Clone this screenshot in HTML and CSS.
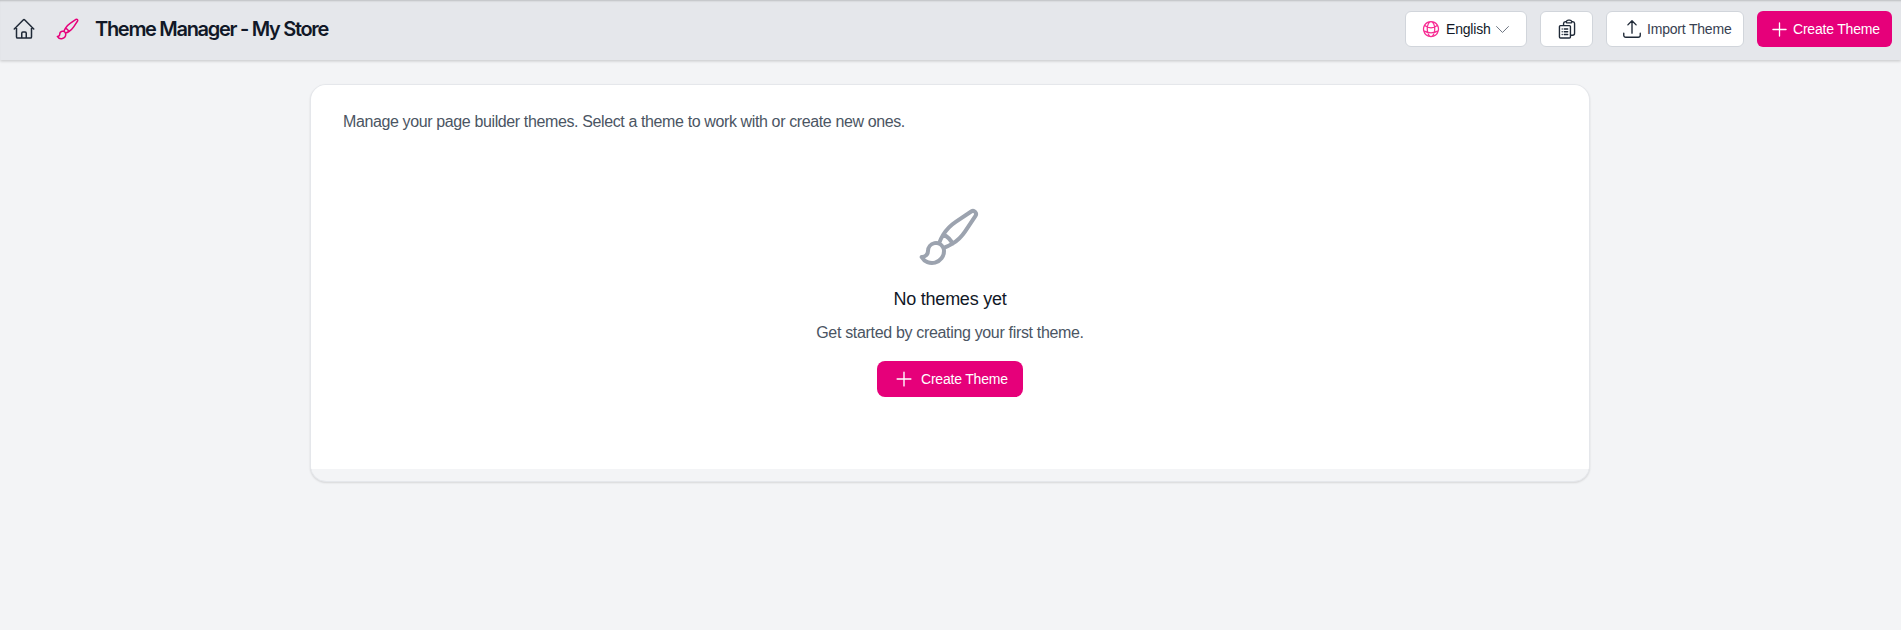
FILE: index.html
```html
<!DOCTYPE html>
<html lang="en">
<head>
    <meta charset="UTF-8">
    <meta name="viewport" content="width=device-width, initial-scale=1.0">
    <title>Theme Manager - My Store</title>
    <link rel="stylesheet" href="styles.css">
</head>
<body>
    <header class="topbar">
        <div class="topbar-left">
            <svg class="icon icon-home" viewBox="0 0 24 24"><path d="m2.25 12 8.954-8.955c.44-.439 1.152-.439 1.591 0L21.75 12M4.5 9.75v10.125c0 .621.504 1.125 1.125 1.125H9.75v-4.875c0-.621.504-1.125 1.125-1.125h2.25c.621 0 1.125.504 1.125 1.125V21h4.125c.621 0 1.125-.504 1.125-1.125V9.75M8.25 21h8.25"/></svg>
            <svg class="icon icon-brush" viewBox="0 0 24 24"><path d="M9.53 16.122a3 3 0 0 0-5.78 1.128 2.25 2.25 0 0 1-2.4 2.245 4.5 4.5 0 0 0 8.4-2.245c0-.399-.078-.78-.22-1.128Zm0 0a15.998 15.998 0 0 0 3.388-1.62m-5.043-.025a15.994 15.994 0 0 1 1.622-3.395m3.42 3.42a15.995 15.995 0 0 0 4.764-4.648l3.876-5.814a1.151 1.151 0 0 0-1.597-1.597L14.146 6.32a15.996 15.996 0 0 0-4.649 4.763m3.42 3.42a6.776 6.776 0 0 0-3.42-3.42"/></svg>
            <h1 class="title">Theme Manager - My Store</h1>
        </div>
        <div class="topbar-right">
            <button class="btn btn-lang">
                <svg class="icon icon-globe" viewBox="0 0 24 24"><path d="M12 21a9.004 9.004 0 0 0 8.716-6.747M12 21a9.004 9.004 0 0 1-8.716-6.747M12 21c2.485 0 4.5-4.03 4.5-9S14.485 3 12 3m0 18c-2.485 0-4.5-4.03-4.5-9S9.515 3 12 3m0 0a8.997 8.997 0 0 1 7.843 4.582M12 3a8.997 8.997 0 0 0-7.843 4.582m15.686 0A11.953 11.953 0 0 1 12 10.5c-2.998 0-5.74-1.1-7.843-2.918m15.686 0A8.959 8.959 0 0 1 21 12c0 .778-.099 1.533-.284 2.253m0 0A17.919 17.919 0 0 1 12 16.5c-3.162 0-6.133-.815-8.716-2.247m0 0A9.015 9.015 0 0 1 3 12c0-1.605.42-3.113 1.157-4.418"/></svg>
                <span>English</span>
                <svg class="icon icon-chevron" viewBox="0 0 24 24"><path d="m19.5 8.25-7.5 7.5-7.5-7.5"/></svg>
            </button>
            <button class="btn btn-clip">
                <svg class="icon icon-clip" viewBox="0 0 24 24"><path d="M9 12h3.75M9 15h3.75M9 18h3.75m3 .75H18a2.25 2.25 0 0 0 2.25-2.25V6.108c0-1.135-.845-2.098-1.976-2.192a48.424 48.424 0 0 0-1.123-.08m-5.801 0c-.065.21-.1.433-.1.664 0 .414.336.75.75.75h4.5a.75.75 0 0 0 .75-.75 2.25 2.25 0 0 0-.1-.664m-5.8 0A2.251 2.251 0 0 1 13.5 2.25H15c1.012 0 1.867.668 2.15 1.586m-5.8 0c-.376.023-.75.05-1.124.08C9.095 4.01 8.25 4.973 8.25 6.108V8.25m0 0H4.875c-.621 0-1.125.504-1.125 1.125v11.25c0 .621.504 1.125 1.125 1.125h9.75c.621 0 1.125-.504 1.125-1.125V9.375c0-.621-.504-1.125-1.125-1.125H8.25ZM6.75 12h.008v.008H6.75V12Zm0 3h.008v.008H6.75V15Zm0 3h.008v.008H6.75V18Z"/></svg>
            </button>
            <button class="btn btn-import">
                <svg class="icon icon-upload" viewBox="0 0 24 24"><path d="M3 16.5v2.25A2.25 2.25 0 0 0 5.25 21h13.5A2.25 2.25 0 0 0 21 18.75V16.5m-13.5-9L12 3m0 0 4.5 4.5M12 3v13.5"/></svg>
                <span>Import Theme</span>
            </button>
            <button class="btn btn-primary btn-create-top">
                <svg class="icon icon-plus" viewBox="0 0 24 24"><path d="M12 4.5v15m7.5-7.5h-15"/></svg>
                <span>Create Theme</span>
            </button>
        </div>
    </header>

    <main class="content">
        <section class="card">
            <div class="card-body">
                <p class="intro">Manage your page builder themes. Select a theme to work with or create new ones.</p>
                <div class="empty">
                    <svg class="icon icon-empty" viewBox="0 0 24 24"><path d="M9.53 16.122a3 3 0 0 0-5.78 1.128 2.25 2.25 0 0 1-2.4 2.245 4.5 4.5 0 0 0 8.4-2.245c0-.399-.078-.78-.22-1.128Zm0 0a15.998 15.998 0 0 0 3.388-1.62m-5.043-.025a15.994 15.994 0 0 1 1.622-3.395m3.42 3.42a15.995 15.995 0 0 0 4.764-4.648l3.876-5.814a1.151 1.151 0 0 0-1.597-1.597L14.146 6.32a15.996 15.996 0 0 0-4.649 4.763m3.42 3.42a6.776 6.776 0 0 0-3.42-3.42"/></svg>
                    <h2 class="empty-title">No themes yet</h2>
                    <p class="empty-text">Get started by creating your first theme.</p>
                    <button class="btn btn-primary btn-create-main">
                        <svg class="icon icon-plus" viewBox="0 0 24 24"><path d="M12 4.5v15m7.5-7.5h-15"/></svg>
                        <span>Create Theme</span>
                    </button>
                </div>
            </div>
            <div class="card-foot"></div>
        </section>
    </main>
</body>
</html>
```

FILE: styles.css
```css
* {
    box-sizing: border-box;
}

body {
    margin: 0;
    height: 630px;
    overflow: hidden;
    font-family: "Liberation Sans", Arial, sans-serif;
    background: #f3f4f6;
    color: #111827;
}

.icon {
    display: block;
    flex: none;
    fill: none;
    stroke: currentColor;
    stroke-width: 1.5;
    stroke-linecap: round;
    stroke-linejoin: round;
}

.topbar {
    height: 60px;
    display: flex;
    justify-content: space-between;
    align-items: center;
    padding: 0 9px 2px 12px;
    background: #e5e7eb;
    box-shadow: inset 0 2px 2px -1px rgba(0, 0, 0, 0.18), 0 1px 3px rgba(0, 0, 0, 0.2);
}

.topbar-left {
    display: flex;
    align-items: center;
}

.icon-home {
    width: 24px;
    height: 24px;
    color: #1f2937;
}

.icon-brush {
    width: 24px;
    height: 24px;
    margin-left: 20px;
    color: #e6007a;
}

.title {
    margin: 0 0 0 15px;
    font-family: Inter, "Liberation Sans", sans-serif;
    font-size: 20px;
    font-weight: 600;
    letter-spacing: -1.3px;
}

.topbar-right {
    display: flex;
    align-items: center;
    gap: 13px;
}

.btn {
    display: flex;
    align-items: center;
    height: 36px;
    padding: 0;
    border: 1px solid #d1d5db;
    border-radius: 6px;
    background: #fff;
    font-family: inherit;
    font-size: 14px;
    letter-spacing: -0.2px;
    color: #374151;
}

.btn-lang {
    width: 122px;
    padding-left: 15px;
    color: #111827;
}

.icon-globe {
    width: 20px;
    height: 20px;
    margin-right: 5px;
    color: #f72d93;
}

.icon-chevron {
    width: 19px;
    height: 19px;
    margin-left: 2px;
    color: #6b7280;
    stroke-width: 1.25;
}

.btn-clip {
    width: 53px;
    justify-content: center;
}

.icon-clip {
    width: 22px;
    height: 22px;
    color: #1f2937;
}

.btn-import {
    width: 138px;
    padding-left: 14px;
}

.icon-upload {
    width: 22px;
    height: 22px;
    margin-right: 4px;
    color: #1f2937;
}

.btn-primary {
    border: 0;
    background: #e6007a;
    color: #fff;
}

.icon-plus {
    width: 21px;
    height: 21px;
}

.btn-create-top {
    width: 135px;
    padding-left: 12px;
}

.btn-create-top .icon-plus {
    margin-right: 3px;
}

.content {
    padding-top: 24px;
    display: flex;
    justify-content: center;
}

.card {
    width: 1280px;
    height: 398px;
    margin-right: 1px;
    display: flex;
    flex-direction: column;
    border-radius: 16px;
    overflow: hidden;
    background: #f3f4f6;
    border: 1px solid #e5e7eb;
    box-shadow: 0 1px 2px rgba(0, 0, 0, 0.12);
}

.card-body {
    flex: 1;
    padding: 25px 32px 0;
    background: #fff;
}

.card-foot {
    height: 12px;
}

.intro {
    margin: 0;
    font-size: 16px;
    line-height: 24px;
    color: #4b5563;
    letter-spacing: -0.38px;
}

.empty {
    display: flex;
    flex-direction: column;
    align-items: center;
    padding-top: 71px;
}

.icon-empty {
    width: 64px;
    height: 64px;
    color: #9ca3af;
}

.empty-title {
    margin: 16px 0 0;
    font-size: 18px;
    line-height: 28px;
    font-weight: 400;
    letter-spacing: -0.25px;
}

.empty-text {
    margin: 8px 0 0;
    font-size: 16px;
    line-height: 24px;
    color: #4b5563;
    letter-spacing: -0.33px;
}

.btn-create-main {
    width: 146px;
    margin-top: 16px;
    padding-left: 16px;
    border-radius: 8px;
}

.btn-create-main .icon-plus {
    width: 22px;
    height: 22px;
    margin-right: 6px;
}
```
